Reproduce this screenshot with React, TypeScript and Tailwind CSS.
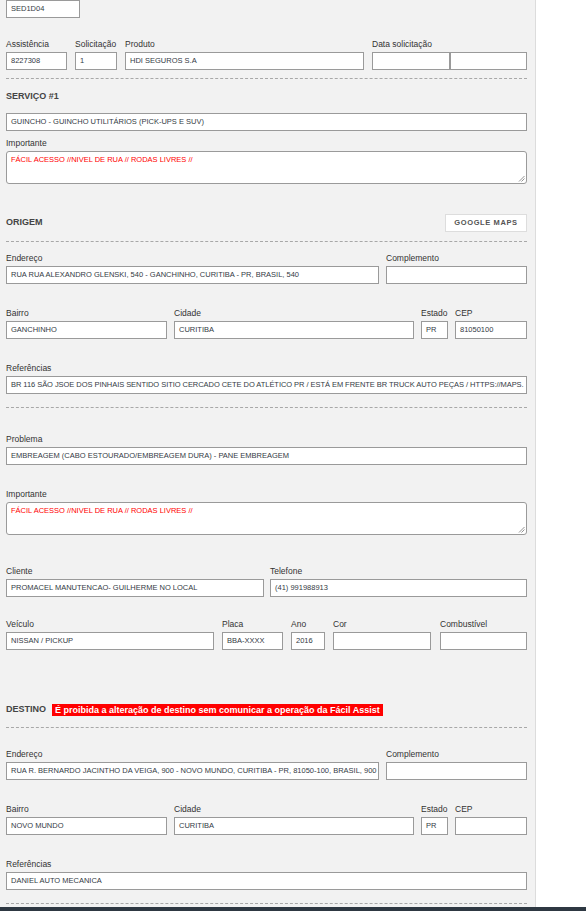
import React from "react";

const FONT = "font-['Liberation_Sans',Arial,sans-serif]";

function Box({ value, className = "", red = false }: { value?: string; className?: string; red?: boolean }) {
  return (
    <div
      className={`h-[18px] shrink-0 border border-[#9a9a9a] bg-white pl-[4px] pr-[1px] flex items-center overflow-hidden whitespace-nowrap text-[7.5px] leading-none ${red ? "text-[#ff0000]" : "text-[#333a44]"} ${className}`}
    >
      {value}
    </div>
  );
}

function Field({ label, value, w, valueClass = "" }: { label: string; value?: string; w: string; valueClass?: string }) {
  return (
    <div className={`flex flex-col shrink-0 ${w}`}>
      <div className="h-[12px] mb-[2px] text-[8.5px] leading-[12px] text-[#333] whitespace-nowrap">{label}</div>
      <Box value={value} className={`w-full ${valueClass}`} />
    </div>
  );
}

function TextArea({ value }: { value: string }) {
  return (
    <div className="relative h-[33px] w-full border border-[#9a9a9a] rounded-[3px] bg-white px-[4px] pt-[3px] text-[7.5px] leading-[10px] text-[#ff0000] whitespace-nowrap overflow-hidden">
      {value}
      <svg className="absolute right-[1px] bottom-[1px]" width="7" height="7" viewBox="0 0 7 7">
        <line x1="6.5" y1="1" x2="1" y2="6.5" stroke="#777" strokeWidth="0.8" />
        <line x1="6.5" y1="3.5" x2="3.5" y2="6.5" stroke="#777" strokeWidth="0.8" />
      </svg>
    </div>
  );
}

function Dash({ className = "" }: { className?: string }) {
  return <div className={`w-full border-t border-dashed border-[#a8a8a8] ${className}`} />;
}

export default function App() {
  return (
    <div className={`${FONT} w-[586px] h-[911px] flex flex-col overflow-hidden`}>
      <div className="flex h-[907px] overflow-hidden">
        <div className="w-[536px] shrink-0 bg-[#f2f2f2] border-r border-[#dcdcdc] pl-[6px] pr-[8px] flex flex-col">
          <Box value="SED1D04" className="w-[74px]" />

          <div className="mt-[20px] flex gap-[8px]">
            <Field label="Assistência" value="8227308" w="w-[61px]" />
            <Field label="Solicitação" value="1" w="w-[42px]" />
            <Field label="Produto" value="HDI SEGUROS S.A" w="w-[239px]" />
            <div className="flex flex-col w-[155px] shrink-0">
              <div className="h-[12px] mb-[2px] text-[8.5px] leading-[12px] text-[#333] whitespace-nowrap">Data solicitação</div>
              <div className="flex">
                <Box className="w-[78px]" />
                <Box className="w-[77px]" />
              </div>
            </div>
          </div>

          <Dash className="mt-[8px]" />

          <div className="mt-[10px] h-[14px] text-[9px] leading-[14px] font-bold text-[#444]">SERVIÇO #1</div>
          <Box value="GUINCHO - GUINCHO UTILITÁRIOS (PICK-UPS E SUV)" className="mt-[10px] w-full" />
          <div className="mt-[6px] h-[12px] mb-[2px] text-[8.5px] leading-[12px] text-[#333]">Importante</div>
          <TextArea value="FÁCIL ACESSO //NIVEL DE RUA // RODAS LIVRES //" />

          <div className="mt-[30px] flex items-center justify-between h-[18px]">
            <div className="text-[9px] font-bold text-[#444]">ORIGEM</div>
            <button className="h-[18px] w-[82px] border border-[#dddddd] bg-white text-[7.5px] font-bold tracking-[0.6px] text-[#555]">
              GOOGLE MAPS
            </button>
          </div>

          <Dash className="mt-[9px]" />

          <div className="mt-[10px] flex gap-[7px]">
            <Field label="Endereço" value="RUA RUA ALEXANDRO GLENSKI, 540 - GANCHINHO, CURITIBA - PR, BRASIL, 540" w="w-[373px]" />
            <Field label="Complemento" w="w-[141px]" />
          </div>

          <div className="mt-[23px] flex gap-[7px]">
            <Field label="Bairro" value="GANCHINHO" w="w-[161px]" />
            <Field label="Cidade" value="CURITIBA" w="w-[240px]" />
            <Field label="Estado" value="PR" w="w-[27px]" />
            <Field label="CEP" value="81050100" w="w-[72px]" />
          </div>

          <div className="mt-[23px] flex">
            <Field
              label="Referências"
              value="BR 116 SÃO JSOE DOS PINHAIS SENTIDO SITIO CERCADO CETE DO ATLÉTICO PR / ESTÁ EM FRENTE BR TRUCK AUTO PEÇAS / HTTPS://MAPS."
              w="w-full"
              valueClass="tracking-[-0.05px]"
            />
          </div>

          <Dash className="mt-[13px]" />

          <div className="mt-[25px] flex">
            <Field label="Problema" value="EMBREAGEM (CABO ESTOURADO/EMBREAGEM DURA) - PANE EMBREAGEM" w="w-full" />
          </div>

          <div className="mt-[23px] h-[12px] mb-[2px] text-[8.5px] leading-[12px] text-[#333]">Importante</div>
          <TextArea value="FÁCIL ACESSO //NIVEL DE RUA // RODAS LIVRES //" />

          <div className="mt-[30px] flex gap-[6px]">
            <Field label="Cliente" value="PROMACEL MANUTENCAO- GUILHERME NO LOCAL" w="w-[258px]" />
            <Field label="Telefone" value="(41) 991988913" w="w-[257px]" />
          </div>

          <div className="mt-[21px] flex">
            <Field label="Veículo" value="NISSAN / PICKUP" w="w-[208px]" />
            <div className="w-[8px] shrink-0" />
            <Field label="Placa" value="BBA-XXXX" w="w-[61px]" />
            <div className="w-[8px] shrink-0" />
            <Field label="Ano" value="2016" w="w-[34px]" />
            <div className="w-[8px] shrink-0" />
            <Field label="Cor" w="w-[98px]" />
            <div className="w-[9px] shrink-0" />
            <Field label="Combustível" w="w-[87px]" />
          </div>

          <div className="mt-[53px] h-[14px] flex items-center gap-[6px]">
            <div className="text-[9px] font-bold text-[#444]">DESTINO</div>
            <div className="h-[12px] bg-[#ff0000] px-[3px] text-[9px] leading-[12px] font-bold text-white whitespace-nowrap">
              É proibida a alteração de destino sem comunicar a operação da Fácil Assist
            </div>
          </div>

          <Dash className="mt-[10px]" />

          <div className="mt-[20px] flex gap-[7px]">
            <Field label="Endereço" value="RUA R. BERNARDO JACINTHO DA VEIGA, 900 - NOVO MUNDO, CURITIBA - PR, 81050-100, BRASIL, 900" w="w-[373px]" />
            <Field label="Complemento" w="w-[141px]" />
          </div>

          <div className="mt-[23px] flex gap-[7px]">
            <Field label="Bairro" value="NOVO MUNDO" w="w-[161px]" />
            <Field label="Cidade" value="CURITIBA" w="w-[240px]" />
            <Field label="Estado" value="PR" w="w-[27px]" />
            <Field label="CEP" w="w-[72px]" />
          </div>

          <div className="mt-[23px] flex">
            <Field label="Referências" value="DANIEL AUTO MECANICA" w="w-full" />
          </div>

          <Dash className="mt-[13px]" />
        </div>
        <div className="flex-1 bg-white" />
      </div>
      <div className="h-[4px] bg-[#2e3842]" />
    </div>
  );
}
